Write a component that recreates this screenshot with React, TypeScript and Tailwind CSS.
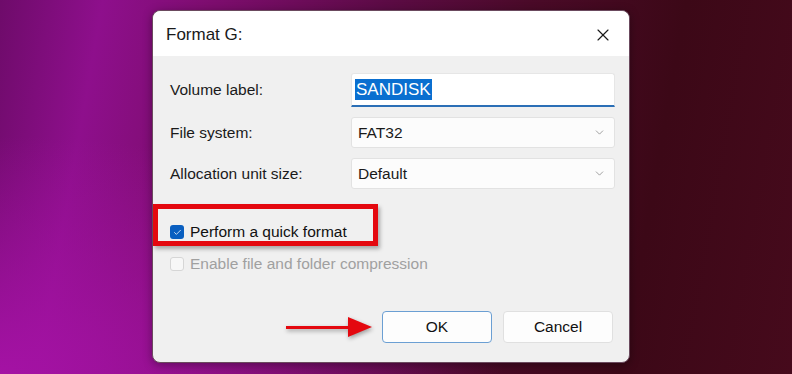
import { X, ChevronDown, Check } from "lucide-react";

const font = { fontFamily: '"Liberation Sans", Arial, sans-serif' };

export default function App() {
  return (
    <div
      style={font}
      className="w-[792px] h-[374px] overflow-hidden pl-[152px] pt-[10px] bg-[radial-gradient(ellipse_at_0%_100%,#a412a4_0%,transparent_45%),linear-gradient(100deg,#6e0b6a_0%,#8e0f8c_12%,#7d0d6e_25%,#5c0b45_45%,#4a0a28_62%,#3c0817_80%,#460a1c_100%)]"
    >
      <div className="relative w-[478px] h-[353px] rounded-[8px] border border-[#6b4a5e] bg-[#f0f0f0] flex flex-col shadow-[0_2px_10px_rgba(0,0,0,0.35)]">
        {/* title bar */}
        <div className="h-[45px] bg-white rounded-t-[8px] flex items-center justify-between pl-[13px] pr-[16px]">
          <span className="text-[17px] text-[#1a1a1a] pt-[2px]">Format G:</span>
          <X size={20} strokeWidth={1.4} className="text-[#1a1a1a] mt-[2px]" />
        </div>

        {/* body */}
        <div className="flex-1 flex flex-col pl-[17px] pr-[16px] pt-[17px] pb-[19px]">
          <div className="grid grid-cols-[181px_264px] gap-y-[10px] items-center">
            <span className="text-[15.5px] text-[#1a1a1a]">Volume label:</span>
            <div className="h-[34px] bg-white border border-[#e6e6e6] border-b-2 border-b-[#2b6fb6] rounded-t-[3px] flex items-center pl-[3px]">
              <span className="bg-[#0a6fd0] text-white text-[17px] leading-[21px] px-[1px]">SANDISK</span>
            </div>

            <span className="text-[15.5px] text-[#1a1a1a]">File system:</span>
            <div className="h-[31px] bg-[#fcfcfc] border border-[#e2e2e2] rounded-[3px] flex items-center justify-between pl-[6px] pr-[8px]">
              <span className="text-[15.5px] text-[#1a1a1a]">FAT32</span>
              <ChevronDown size={13} strokeWidth={1.3} className="text-[#7a7a7a]" />
            </div>

            <span className="text-[15.5px] text-[#1a1a1a]">Allocation unit size:</span>
            <div className="h-[31px] bg-[#fcfcfc] border border-[#e2e2e2] rounded-[3px] flex items-center justify-between pl-[6px] pr-[8px]">
              <span className="text-[15.5px] text-[#1a1a1a]">Default</span>
              <ChevronDown size={13} strokeWidth={1.3} className="text-[#7a7a7a]" />
            </div>
          </div>

          <div className="relative mt-[35px] flex items-center gap-[6px] h-[16px]">
            <div className="w-[14px] h-[14px] rounded-[3px] bg-[#0a5fc0] flex items-center justify-center">
              <Check size={9} strokeWidth={2} className="text-white" />
            </div>
            <span className="text-[15.5px] text-[#111]">Perform a quick format</span>
            <div className="absolute left-[-17px] top-[-20px] w-[225px] h-[42px] border-[5px] border-[#e4080f] shadow-[2px_3px_4px_rgba(0,0,0,0.3)]" />
          </div>

          <div className="mt-[16px] flex items-center gap-[6px] h-[16px]">
            <div className="w-[14px] h-[14px] rounded-[3px] border border-[#d6d6d6] bg-[#f7f7f7]" />
            <span className="text-[15.5px] text-[#a0a0a0]">Enable file and folder compression</span>
          </div>

          <div className="mt-auto flex justify-end gap-[11px] relative">
            <div className="absolute right-[241px] top-[6px] flex items-center drop-shadow-[1px_2px_2px_rgba(0,0,0,0.35)]">
              <div className="w-[62px] h-[3px] bg-[#e4080f]" />
              <svg width="24" height="20" viewBox="0 0 24 20">
                <polygon points="0,0 24,10 0,20" fill="#e4080f" />
              </svg>
            </div>
            <button className="w-[110px] h-[32px] bg-[#fdfdfd] border border-[#6b9fd3] rounded-[4px] text-[15.5px] text-[#111]">
              OK
            </button>
            <button className="w-[110px] h-[32px] bg-[#fdfdfd] border border-[#e0e0e0] rounded-[4px] text-[15.5px] text-[#111]">
              Cancel
            </button>
          </div>
        </div>
      </div>
    </div>
  );
}
